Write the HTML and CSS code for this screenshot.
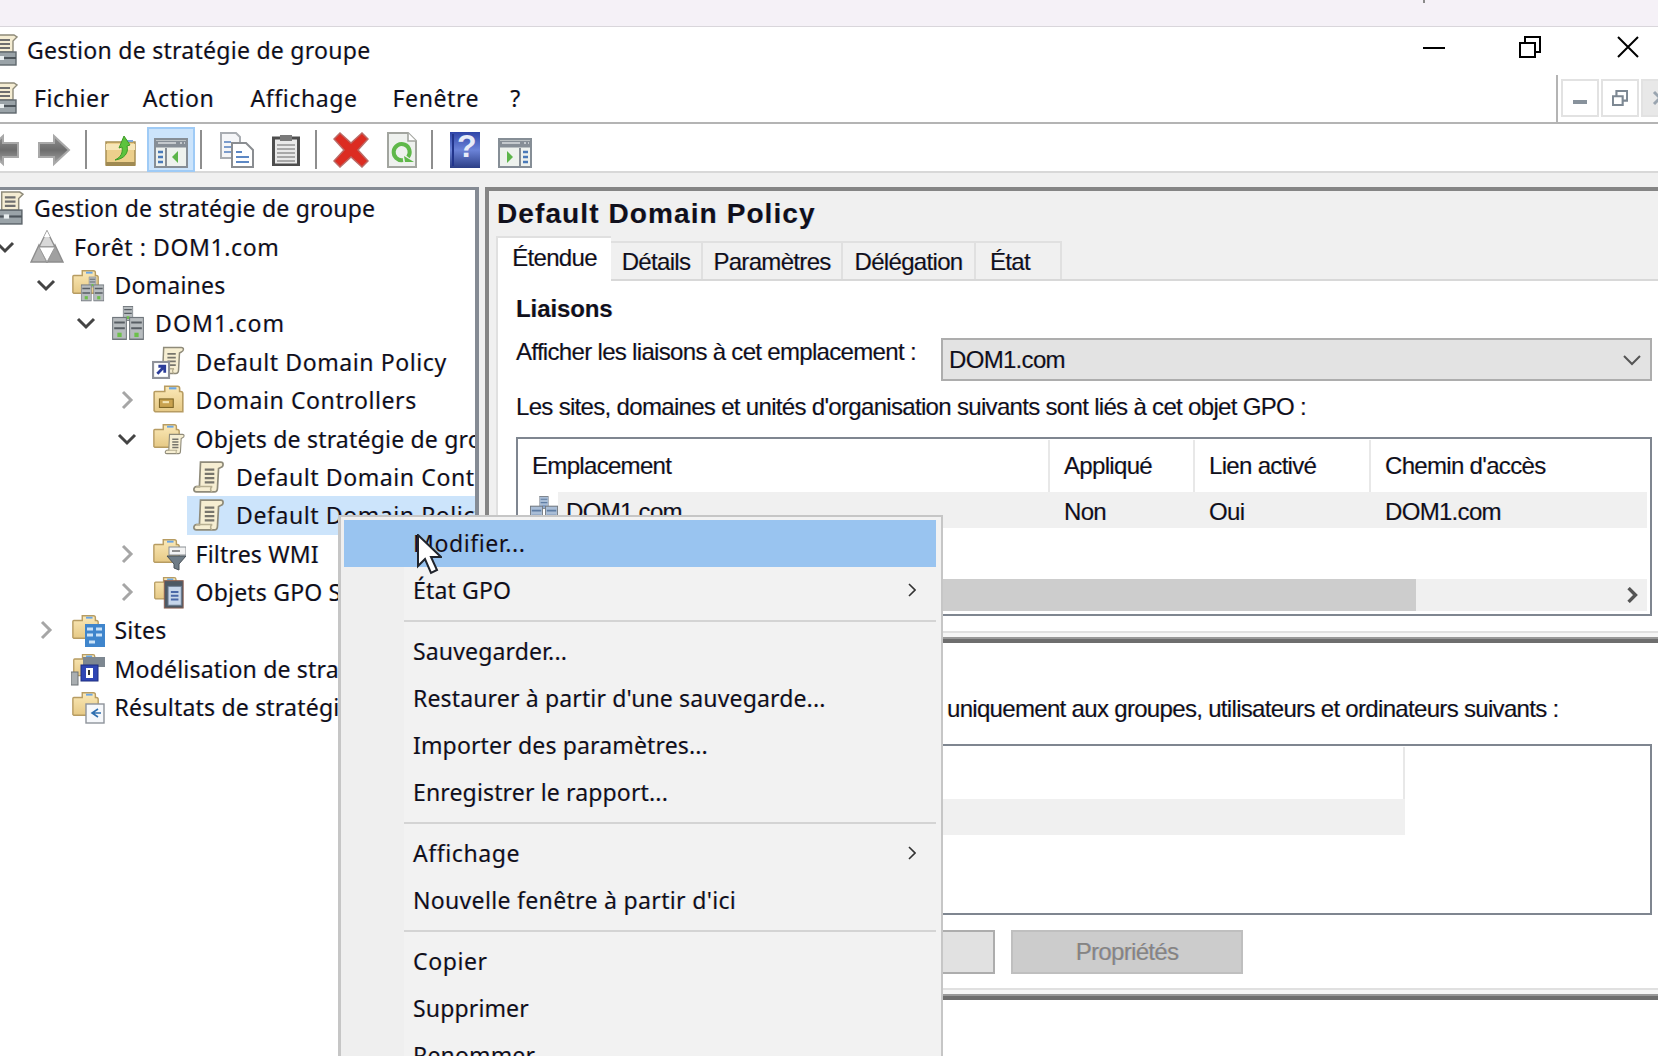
FILE: index.html
```html
<!DOCTYPE html>
<html lang="fr">
<head>
    <meta charset="UTF-8">
    <title>Gestion de stratégie de groupe</title>
    <link rel="stylesheet" href="styles.css">
</head>
<body>
    <svg class="sprites" aria-hidden="true">
        <defs>
            <linearGradient id="gFolder" x1="0" y1="0" x2="0" y2="1">
                <stop offset="0" stop-color="#fbe9b8"/>
                <stop offset="1" stop-color="#e6c985"/>
            </linearGradient>
            <linearGradient id="gArrow" x1="0" y1="0" x2="0" y2="1">
                <stop offset="0" stop-color="#8f8f8f"/>
                <stop offset=".5" stop-color="#6d6d6d"/>
                <stop offset="1" stop-color="#a5a5a5"/>
            </linearGradient>
            <linearGradient id="gHelp" x1="0" y1="0" x2="0" y2="1">
                <stop offset="0" stop-color="#2f45a8"/>
                <stop offset=".5" stop-color="#6b83d8"/>
                <stop offset="1" stop-color="#2c3f86"/>
            </linearGradient>
            <symbol id="i-folder" viewBox="0 0 32 32">
                <path d="M2 9a1 1 0 0 1 1-1h9V3h12a2 2 0 0 1 2 2v3h1a2 2 0 0 1 2 2v17H3l-1-1z" fill="url(#gFolder)" stroke="#b79c62" stroke-width="1.5"/>
                <path d="M16 5h7" stroke="#6aa6e6" stroke-width="2"/>
            </symbol>
            <symbol id="i-scroll" viewBox="0 0 32 32">
                <path d="M8 2h19c3 0 3 4 0 5l-2 1-1 18c0 2-1 4-3 4H4c-3 0-3-4 0-5h3z" fill="#f6eed2" stroke="#8f8b7a" stroke-width="1.6"/>
                <path d="M12 9h9M12 13h9M12 17h9M12 21h9" stroke="#77756c" stroke-width="2"/>
                <path d="M4 25h15c-2 1-2 4 0 5" fill="none" stroke="#b8b092" stroke-width="1.5"/>
            </symbol>
            <symbol id="i-server" viewBox="0 0 14 16" preserveAspectRatio="none">
                <rect class="srv-body" x=".5" y=".5" width="13" height="15" stroke="#70767c"/>
                <path class="srv-line" d="M2 4h10M2 8h10" stroke-width="1.4"/>
                <rect class="srv-led" x="5" y="11" width="4" height="3"/>
            </symbol>
            <symbol id="i-console" viewBox="0 0 32 32">
                <path d="M11 1h17l3 2-4 4v11H11z" fill="#f5edd3" stroke="#8f8b7a" stroke-width="1.4"/>
                <path d="M14 6h10M14 10h10M14 14h10" stroke="#6f6f6f" stroke-width="2"/>
                <rect x="3" y="18" width="27" height="13" fill="#9aa3a8" stroke="#5f676d" stroke-width="1.4"/>
                <path d="M3 24h27" stroke="#4d555b" stroke-width="2"/>
                <rect x="13" y="22" width="5" height="4" fill="#e9eef0"/>
            </symbol>
            <symbol id="i-forest" viewBox="0 0 34 34">
                <path d="M17 1l8 16H9z" fill="#d8d8d8" stroke="#8d8d8d" stroke-width="1.4"/>
                <path d="M9 15l8 17H1z" fill="#b4b4b4" stroke="#8d8d8d" stroke-width="1.4"/>
                <path d="M25 15l8 17H17z" fill="#a0a0a0" stroke="#8d8d8d" stroke-width="1.4"/>
                <path d="M17 17h-8l8 15 8-15z" fill="#fff" stroke="#9a9a9a"/>
                <path d="M17 1l-3 6h6z" fill="#fff"/>
            </symbol>
            <symbol id="i-domain" viewBox="0 0 32 32">
                <use href="#i-server" x="11" y="0" width="10" height="14"/>
                <use href="#i-server" x="1" y="10" width="14" height="22"/>
                <use href="#i-server" x="17" y="10" width="14" height="22"/>
            </symbol>
            <symbol id="i-domains" viewBox="0 0 34 34">
                <use href="#i-folder" x="0" y="0" width="30" height="30"/>
                <use href="#i-domain" x="9" y="8" width="25" height="26"/>
            </symbol>
            <symbol id="i-link" viewBox="0 0 32 32">
                <use href="#i-scroll" x="4" y="0" width="28" height="29"/>
                <rect x="1" y="16" width="15" height="15" fill="#fff" stroke="#8f929a" stroke-width="2"/>
                <path d="M5 27l6-6M6 20h6v6" fill="none" stroke="#2c3d9a" stroke-width="2.6"/>
            </symbol>
            <symbol id="i-ou" viewBox="0 0 32 32">
                <use href="#i-folder" x="0" y="0" width="32" height="32"/>
                <rect x="7" y="15" width="13" height="8" fill="#c9a24f" stroke="#7d6526"/>
                <path d="M10 18h6" stroke="#f4e5b4" stroke-width="2"/>
            </symbol>
            <symbol id="i-gpos" viewBox="0 0 34 34">
                <use href="#i-folder" x="0" y="0" width="30" height="30"/>
                <use href="#i-scroll" x="12" y="10" width="22" height="24"/>
            </symbol>
            <symbol id="i-wmi" viewBox="0 0 34 34">
                <use href="#i-folder" x="0" y="0" width="30" height="30"/>
                <rect x="17" y="10" width="17" height="8" fill="#f3f3f3" stroke="#8a8f94"/>
                <path d="M15 19h19l-7 8v6l-5-2v-4z" fill="#6f7c86" stroke="#4a5259"/>
                <path d="M20 14h8" stroke="#777" stroke-width="1.6"/>
            </symbol>
            <symbol id="i-starter" viewBox="0 0 34 36">
                <use href="#i-folder" x="0" y="0" width="30" height="30"/>
                <rect x="12" y="6" width="20" height="29" fill="#4d5964" stroke="#8f5f50"/>
                <rect x="16" y="12" width="14" height="20" fill="#c7d6ea" stroke="#6b7c92"/>
                <path d="M19 18h8M19 22h8M19 26h8" stroke="#4a68a8" stroke-width="2"/>
            </symbol>
            <symbol id="i-sites" viewBox="0 0 34 34">
                <use href="#i-folder" x="0" y="0" width="30" height="30"/>
                <rect x="14" y="11" width="20" height="23" fill="#3f85cc"/>
                <path d="M16 16h6M25 16h6M16 22h6M25 22h6M18 29h6" stroke="#c9e2f7" stroke-width="3"/>
            </symbol>
            <symbol id="i-model" viewBox="0 0 34 34">
                <use href="#i-folder" x="1" y="0" width="28" height="28"/>
                <rect x="12" y="5" width="22" height="10" fill="#7d8791"/>
                <rect x="0" y="20" width="7" height="13" fill="#a9aeb1" stroke="#6d7276"/>
                <rect x="10" y="13" width="17" height="16" fill="#2f46b4" stroke="#1f2f80"/>
                <rect x="15" y="16" width="7" height="10" fill="#fff"/>
                <path d="M18 18v5" stroke="#333" stroke-width="2"/>
            </symbol>
            <symbol id="i-results" viewBox="0 0 34 34">
                <use href="#i-folder" x="0" y="0" width="30" height="30"/>
                <rect x="15" y="14" width="18" height="19" fill="#f6f8fb" stroke="#8e939a" stroke-width="1.4"/>
                <path d="M27 19l-6 4 6 4M21 23h9" fill="none" stroke="#2f6fb0" stroke-width="1.6"/>
            </symbol>
            <symbol id="i-left" viewBox="0 0 34 34">
                <path d="M17 3L2 17l15 14v-7h15V10H17z" fill="url(#gArrow)" stroke="#a9a9a9" stroke-width="2"/>
            </symbol>
            <symbol id="i-right" viewBox="0 0 34 34">
                <path d="M17 3l15 14-15 14v-7H2V10h15z" fill="url(#gArrow)" stroke="#a9a9a9" stroke-width="2"/>
            </symbol>
            <symbol id="i-up" viewBox="0 0 32 34">
                <path d="M1 9h29v23H1z" fill="#eccf8c" stroke="#a89054" stroke-width="1.5"/>
                <path d="M1 14h29" stroke="#f7e6b8" stroke-width="6"/>
                <path d="M1 31h29" stroke="#a08a52" stroke-width="4"/>
                <path d="M20 8h8" stroke="#7fa8d8" stroke-width="2"/>
                <path d="M10 27c6-3 8-7 7-13l-3 1 5-12 6 9-3 1c2 7-3 13-12 14z" fill="#5cc33d" stroke="#3d9a27"/>
            </symbol>
            <symbol id="i-pane-l" viewBox="0 0 34 30">
                <rect x="1" y="1" width="32" height="28" fill="#eef2ee" stroke="#868e96" stroke-width="2"/>
                <path d="M1 6h32" stroke="#868e96" stroke-width="7"/>
                <path d="M4 5h18M26 5h2M30 5h1" stroke="#d9dde0" stroke-width="1.6"/>
                <path d="M12 10v18" stroke="#868e96" stroke-width="2"/>
                <path d="M4 14h5M4 19h5M4 24h5" stroke="#4a7ab8" stroke-width="2.4"/>
                <path d="M24 13v12l-6-6z" fill="#5cb54a"/>
            </symbol>
            <symbol id="i-pane-r" viewBox="0 0 34 30">
                <rect x="1" y="1" width="32" height="28" fill="#eef2ee" stroke="#868e96" stroke-width="2"/>
                <path d="M1 6h32" stroke="#868e96" stroke-width="7"/>
                <path d="M4 5h18M26 5h2M30 5h1" stroke="#d9dde0" stroke-width="1.6"/>
                <path d="M22 10v18" stroke="#868e96" stroke-width="2"/>
                <path d="M25 14h5M25 19h5M25 24h5" stroke="#4a7ab8" stroke-width="2.4"/>
                <path d="M9 13v12l6-6z" fill="#5cb54a"/>
            </symbol>
            <symbol id="i-copy" viewBox="0 0 36 36">
                <path d="M2 1h15l4 4v21H2z" fill="#f5f6f8" stroke="#a9adb2" stroke-width="2"/>
                <path d="M5 10h7M5 15h10M5 20h10" stroke="#7b9ccc" stroke-width="2"/>
                <path d="M13 11h14l7 7v17H13z" fill="#fff" stroke="#8a8d91" stroke-width="2"/>
                <path d="M17 20h6M17 25h13M17 30h13" stroke="#5d88c4" stroke-width="2"/>
            </symbol>
            <symbol id="i-paste" viewBox="0 0 28 32">
                <rect x="1.5" y="4" width="25" height="27" fill="#e9e9e9" stroke="#4d4d4d" stroke-width="3"/>
                <rect x="8" y="1" width="12" height="6" fill="#7a7a7a"/>
                <path d="M5 11h18M5 15h18M5 19h18M5 23h18M5 27h18" stroke="#a8a8a8" stroke-width="2"/>
            </symbol>
            <symbol id="i-delete" viewBox="0 0 36 36">
                <path d="M7 1l11 10L29 1l6 6-10 11 10 11-6 6-11-10L7 35l-6-6 10-11L1 7z" fill="#dc2c22" stroke="#bb6a66" stroke-width="1.5"/>
            </symbol>
            <symbol id="i-refresh" viewBox="0 0 30 36">
                <path d="M1 1h20l8 8v26H1z" fill="#eef1ee" stroke="#a2a59f" stroke-width="2"/>
                <path d="M21 1v8h8" fill="#fff" stroke="#a2a59f" stroke-width="1.6"/>
                <path d="M21 25a8 8 0 1 0-5 3" fill="none" stroke="#5fb84a" stroke-width="4"/>
                <path d="M17 24l10 6h-9z" fill="#5fb84a"/>
            </symbol>
            <symbol id="i-help" viewBox="0 0 30 36">
                <rect width="30" height="36" fill="url(#gHelp)"/>
                <path d="M2 2h2v32H2" fill="#22358c"/>
            </symbol>
            <symbol id="i-chev-down" viewBox="0 0 20 14">
                <path d="M2 3l8 8 8-8" fill="none" stroke="#444" stroke-width="3"/>
            </symbol>
            <symbol id="i-chev-right" viewBox="0 0 14 20">
                <path d="M3 2l8 8-8 8" fill="none" stroke="#a6a6a6" stroke-width="3"/>
            </symbol>
        </defs>
    </svg>

    <div class="app">
        <div class="top-strip"><span class="strip-mark"></span></div>

        <div class="title-bar">
            <svg class="bar-icon"><use href="#i-console"/></svg>
            <span class="title-text">Gestion de stratégie de groupe</span>
            <div class="win-buttons">
                <svg class="win-min" viewBox="0 0 22 2"><rect width="22" height="2"/></svg>
                <svg class="win-restore" viewBox="0 0 22 22"><path d="M1 7h15v14H1zM6 6V1h15v15h-4" fill="none" stroke="#000" stroke-width="2"/></svg>
                <svg class="win-close" viewBox="0 0 22 22"><path d="M1 1l20 20M21 1L1 21" stroke="#000" stroke-width="2"/></svg>
            </div>
        </div>

        <div class="menu-bar">
            <div class="menu-main">
                <svg class="bar-icon"><use href="#i-console"/></svg>
                <span class="menu-item m-fichier">Fichier</span>
                <span class="menu-item m-action">Action</span>
                <span class="menu-item m-affichage">Affichage</span>
                <span class="menu-item m-fenetre">Fenêtre</span>
                <span class="menu-item m-help">?</span>
            </div>
            <div class="mdi-buttons">
                <div class="mdi-btn"><svg viewBox="0 0 14 4"><rect width="14" height="4" fill="#88929c"/></svg></div>
                <div class="mdi-btn"><svg viewBox="0 0 18 18"><path d="M1 7h11v10H1zM5 6V1h12v11h-4" fill="none" stroke="#7d8893" stroke-width="2.4"/></svg></div>
                <div class="mdi-btn mdi-close"><svg viewBox="0 0 16 16"><path d="M2 2l12 12M14 2L2 14" stroke="#9aa5b0" stroke-width="3"/></svg></div>
            </div>
        </div>

        <div class="toolbar">
            <svg class="tb-back"><use href="#i-left"/></svg>
            <svg class="tb-forward"><use href="#i-right"/></svg>
            <span class="tb-sep sep-1"></span>
            <svg class="tb-up"><use href="#i-up"/></svg>
            <span class="tb-active"><svg class="tb-pane"><use href="#i-pane-l"/></svg></span>
            <span class="tb-sep sep-2"></span>
            <svg class="tb-copy"><use href="#i-copy"/></svg>
            <svg class="tb-paste"><use href="#i-paste"/></svg>
            <span class="tb-sep sep-3"></span>
            <svg class="tb-delete"><use href="#i-delete"/></svg>
            <svg class="tb-refresh"><use href="#i-refresh"/></svg>
            <span class="tb-sep sep-4"></span>
            <span class="tb-help"><svg><use href="#i-help"/></svg><b>?</b></span>
            <svg class="tb-pane tb-last"><use href="#i-pane-r"/></svg>
        </div>

        <div class="main">
            <div class="tree">
                <div class="row l0"><span class="chev"></span><div class="item"><svg class="ico"><use href="#i-console"/></svg><span>Gestion de stratégie de groupe</span></div></div>
                <div class="row l1"><svg class="chev"><use href="#i-chev-down"/></svg><div class="item"><svg class="ico"><use href="#i-forest"/></svg><span class="wide">Forêt : DOM1.com</span></div></div>
                <div class="row l2"><svg class="chev"><use href="#i-chev-down"/></svg><div class="item"><svg class="ico"><use href="#i-domains"/></svg><span>Domaines</span></div></div>
                <div class="row l3"><svg class="chev"><use href="#i-chev-down"/></svg><div class="item"><svg class="ico"><use href="#i-domain"/></svg><span class="wider">DOM1.com</span></div></div>
                <div class="row l4"><span class="chev"></span><div class="item"><svg class="ico"><use href="#i-link"/></svg><span class="wide">Default Domain Policy</span></div></div>
                <div class="row l4"><svg class="chev chev-r"><use href="#i-chev-right"/></svg><div class="item"><svg class="ico"><use href="#i-ou"/></svg><span class="wide">Domain Controllers</span></div></div>
                <div class="row l4"><svg class="chev"><use href="#i-chev-down"/></svg><div class="item"><svg class="ico"><use href="#i-gpos"/></svg><span>Objets de stratégie de groupe</span></div></div>
                <div class="row l5"><span class="chev"></span><div class="item"><svg class="ico"><use href="#i-scroll"/></svg><span class="wide">Default Domain Controllers Policy</span></div></div>
                <div class="row l5"><span class="chev"></span><div class="item selected"><svg class="ico"><use href="#i-scroll"/></svg><span class="wide">Default Domain Policy</span></div></div>
                <div class="row l4"><svg class="chev chev-r"><use href="#i-chev-right"/></svg><div class="item"><svg class="ico"><use href="#i-wmi"/></svg><span>Filtres WMI</span></div></div>
                <div class="row l4"><svg class="chev chev-r"><use href="#i-chev-right"/></svg><div class="item"><svg class="ico"><use href="#i-starter"/></svg><span>Objets GPO Starter</span></div></div>
                <div class="row l2"><svg class="chev chev-r"><use href="#i-chev-right"/></svg><div class="item"><svg class="ico"><use href="#i-sites"/></svg><span>Sites</span></div></div>
                <div class="row l2"><span class="chev"></span><div class="item"><svg class="ico"><use href="#i-model"/></svg><span>Modélisation de stratégie de groupe</span></div></div>
                <div class="row l2"><span class="chev"></span><div class="item"><svg class="ico"><use href="#i-results"/></svg><span>Résultats de stratégie de groupe</span></div></div>
            </div>

            <div class="details">
                <h1>Default Domain Policy</h1>
                <div class="tabs">
                    <span class="tab active">Étendue</span>
                    <span class="tab t-details">Détails</span>
                    <span class="tab t-params">Paramètres</span>
                    <span class="tab t-deleg">Délégation</span>
                    <span class="tab t-etat">État</span>
                </div>
                <div class="tab-body">
                    <section class="sec sec-links">
                        <h2>Liaisons</h2>
                        <div class="field">
                            <label>Afficher les liaisons à cet emplacement :</label>
                            <div class="select">
                                <span>DOM1.com</span>
                                <svg viewBox="0 0 20 12"><path d="M2 2l8 8 8-8" fill="none" stroke="#555" stroke-width="2"/></svg>
                            </div>
                        </div>
                        <p class="line-links">Les sites, domaines et unités d'organisation suivants sont liés à cet objet GPO :</p>
                        <div class="list list-links">
                            <div class="list-head">
                                <span>Emplacement</span><span>Appliqué</span><span>Lien activé</span><span>Chemin d'accès</span>
                            </div>
                            <div class="list-row">
                                <span class="cell-first"><svg class="row-ico"><use href="#i-domain"/></svg><em>DOM1.com</em></span><span>Non</span><span>Oui</span><span>DOM1.com</span>
                            </div>
                            <div class="scrollbar">
                                <div class="thumb"></div>
                                <svg viewBox="0 0 10 14"><path d="M2 1l6 6-6 6" fill="none" stroke="#555" stroke-width="3"/></svg>
                            </div>
                        </div>
                    </section>
                    <div class="splitter"></div>
                    <section class="sec sec-filter">
                        <h2>Filtrage de sécurité</h2>
                        <p class="line-filter">Les paramètres dans ce GPO s'appliquent uniquement aux groupes, utilisateurs et ordinateurs suivants :</p>
                        <div class="list list-filter">
                            <div class="filter-head"><span>Nom</span></div>
                            <div class="filter-row"><span>Utilisateurs authentifiés</span></div>
                        </div>
                        <div class="buttons">
                            <button class="btn">Ajouter...</button>
                            <button class="btn">Supprimer</button>
                            <button class="btn disabled">Propriétés</button>
                        </div>
                    </section>
                    <div class="splitter"></div>
                    <section class="sec-wmi">
                        <p>Ce GPO est lié au filtre WMI suivant</p>
                    </section>
                </div>
            </div>
        </div>

        <div class="context-menu">
            <div class="cm-item cm-wide hover">Modifier...</div>
            <div class="cm-item">État GPO<svg viewBox="0 0 8 14"><path d="M1 1l6 6-6 6" fill="none" stroke="#333" stroke-width="1.6"/></svg></div>
            <div class="cm-sep"></div>
            <div class="cm-item">Sauvegarder...</div>
            <div class="cm-item">Restaurer à partir d'une sauvegarde...</div>
            <div class="cm-item">Importer des paramètres...</div>
            <div class="cm-item">Enregistrer le rapport...</div>
            <div class="cm-sep"></div>
            <div class="cm-item cm-wide">Affichage<svg viewBox="0 0 8 14"><path d="M1 1l6 6-6 6" fill="none" stroke="#333" stroke-width="1.6"/></svg></div>
            <div class="cm-item cm-new">Nouvelle fenêtre à partir d'ici</div>
            <div class="cm-sep"></div>
            <div class="cm-item cm-wide">Copier</div>
            <div class="cm-item">Supprimer</div>
            <div class="cm-item">Renommer</div>
        </div>

        <svg class="cursor" viewBox="0 0 25 41"><path d="M1 1v31l7-7 6 14 6-3-6-13h10z" fill="#fff" stroke="#20242c" stroke-width="2"/></svg>
    </div>
</body>
</html>
```

FILE: styles.css
```css
* {
    box-sizing: border-box;
}
body {
    margin: 0;
    background-color: #fff;
    color: #10101c;
    font-family: "Noto Sans", sans-serif;
    font-size: 23px;
    text-shadow: -0.6px 0 rgba(255, 180, 60, 0.35), 0.6px 0 rgba(60, 130, 255, 0.35);
}
.sprites {
    position: absolute;
    width: 0;
    height: 0;
}
.srv-body {
    fill: var(--srv, #b7bcbf);
}
.srv-line {
    stroke: var(--srv-line, #585e64);
}
.srv-led {
    fill: var(--srv-led, #6cc04a);
}
.app {
    position: relative;
    width: 1658px;
    height: 1056px;
    overflow: hidden;
}

/* window chrome */
.top-strip {
    height: 27px;
    padding-left: 1423px;
    background-color: #f5f1f7;
    border-bottom: 1px solid #d9d6db;
}
.strip-mark {
    display: block;
    width: 2px;
    height: 3px;
    background-color: #8a8a8a;
}
.title-bar {
    height: 46px;
    display: flex;
    align-items: center;
}
.bar-icon {
    width: 32px;
    height: 32px;
    margin-left: -14px;
    flex: none;
}
.title-text {
    margin-left: 9px;
    letter-spacing: 0.27px;
}
.win-buttons {
    margin-left: auto;
    display: flex;
    align-items: center;
    padding-right: 19px;
    height: 100%;
}
.win-min {
    width: 22px;
    height: 2px;
    margin-top: -4px;
}
.win-restore {
    width: 22px;
    height: 22px;
    margin-left: 74px;
    margin-top: -6px;
}
.win-close {
    width: 22px;
    height: 22px;
    margin-left: 76px;
    margin-top: -6px;
}
.menu-bar {
    height: 51px;
    display: flex;
}
.menu-main {
    width: 1558px;
    flex: none;
    display: flex;
    align-items: center;
    padding-bottom: 2px;
    border-bottom: 2px solid #b4b4b4;
    border-right: 2px solid #b4b4b4;
    margin-top: 2px;
}
.menu-item {
    flex: none;
    letter-spacing: 0.6px;
}
.m-fichier { margin-left: 16px; }
.m-action { margin-left: 33px; }
.m-affichage { margin-left: 36px; }
.m-fenetre { margin-left: 35px; }
.m-help { margin-left: 31px; }
.mdi-buttons {
    flex: none;
    width: 100px;
    display: flex;
    gap: 2px;
    padding: 6px 0 5px 3px;
    border-bottom: 2px solid #b4b4b4;
}
.mdi-btn {
    width: 38px;
    height: 38px;
    flex: none;
    border: 2px solid #e2e2e2;
    display: flex;
    align-items: center;
    justify-content: center;
}
.mdi-btn svg {
    width: 16px;
    height: 16px;
    flex: none;
}
.mdi-btn:first-child svg {
    height: 4px;
    width: 14px;
    margin-top: 8px;
}
.mdi-close {
    background-color: #e8e8e8;
}

/* toolbar */
.toolbar {
    height: 49px;
    display: flex;
    align-items: center;
    border-bottom: 2px solid #d8d8d8;
}
.toolbar > svg,
.tb-help {
    flex: none;
    margin-top: 5px;
}
.tb-back {
    width: 34px;
    height: 34px;
    margin-left: -14px;
}
.tb-forward {
    width: 34px;
    height: 34px;
    margin-left: 17px;
}
.tb-sep {
    flex: none;
    width: 2px;
    height: 39px;
    margin-top: 3px;
    background-color: #8e8e8e;
}
.sep-1 { margin-left: 14px; }
.tb-up {
    width: 32px;
    height: 34px;
    margin-left: 18px;
}
.tb-active {
    flex: none;
    width: 48px;
    height: 45px;
    margin-left: 10px;
    margin-top: 3px;
    background-color: #cce4fb;
    border: 2px solid #9fcbf6;
    display: flex;
    align-items: center;
    justify-content: center;
}
.tb-pane {
    width: 34px;
    height: 30px;
    margin-top: 8px;
}
.sep-2 { margin-left: 5px; }
.tb-copy {
    width: 36px;
    height: 36px;
    margin-left: 17px;
}
.tb-paste {
    width: 28px;
    height: 32px;
    margin-left: 17px;
}
.sep-3 { margin-left: 15px; }
.tb-delete {
    width: 36px;
    height: 36px;
    margin-left: 16px;
}
.tb-refresh {
    width: 30px;
    height: 36px;
    margin-left: 18px;
}
.sep-4 { margin-left: 14px; }
.tb-help {
    position: relative;
    width: 30px;
    height: 36px;
    margin-left: 17px;
}
.tb-help svg {
    width: 30px;
    height: 36px;
}
.tb-help b {
    position: absolute;
    left: 7px;
    top: -4px;
    color: #e8ecf8;
    font-size: 32px;
    font-family: "Liberation Sans", sans-serif;
    text-shadow: none;
}
.toolbar > .tb-last {
    margin-left: 18px;
    margin-top: 11px;
}

/* main area */
.main {
    height: 883px;
    display: flex;
    padding-top: 14px;
    background-color: #f0f0f0;
}

/* tree */
.tree {
    width: 479px;
    flex: none;
    background-color: #fff;
    border-top: 3px solid #858b94;
    border-right: 4px solid #858b94;
    overflow: hidden;
}
.row {
    height: 38.4px;
    display: flex;
    align-items: center;
    white-space: nowrap;
}
.row:first-child {
    margin-top: -1px;
}
.l0 { margin-left: -45px; }
.l1 { margin-left: -5px; }
.l2 { margin-left: 35.5px; }
.l3 { margin-left: 76px; }
.l4 { margin-left: 116.5px; }
.l5 { margin-left: 157px; }
.chev {
    flex: none;
    width: 20px;
    height: 14px;
    margin-right: 15px;
}
.chev-r {
    height: 20px;
}
.item {
    flex: 1;
    height: 100%;
    display: flex;
    align-items: center;
    gap: 10px;
    margin-left: -5px;
    padding-left: 5px;
    letter-spacing: 0.2px;
}
.item .wide {
    letter-spacing: 0.6px;
}
.item .wider {
    letter-spacing: 1.1px;
}
.item.selected {
    background-color: #cce4fb;
}
.ico {
    width: 34px;
    height: 34px;
    flex: none;
}

/* right panel */
.details {
    flex: 1;
    margin-left: 6px;
    min-width: 0;
    border-top: 4px solid #858585;
    border-left: 4px solid #858585;
    font-family: "Liberation Sans", sans-serif;
    font-size: 24px;
    letter-spacing: -0.68px;
}
h1 {
    margin: 0;
    height: 44px;
    padding: 7px 0 0 8px;
    font-size: 28px;
    line-height: 32px;
    font-family: "Liberation Sans", sans-serif;
    letter-spacing: 1.1px;
}
.tabs {
    height: 46px;
    margin-left: 7px;
    display: flex;
    align-items: flex-end;
    border-bottom: 2px solid #d8d8d8;
}
.tab {
    height: 38px;
    padding-top: 2px;
    border: 2px solid #e0e0e0;
    border-left: 0;
    border-bottom: 0;
    display: flex;
    align-items: center;
    justify-content: center;
    flex: none;
}
.tab.active {
    height: 45px;
    width: 115px;
    margin-bottom: -2px;
    padding-top: 0;
    padding-bottom: 3px;
    background-color: #fff;
    border-left: 2px solid #e0e0e0;
    border-right: 0;
}
.t-details { width: 92px; }
.t-params { width: 140px; }
.t-deleg { width: 133px; }
.t-etat {
    width: 86px;
    justify-content: flex-start;
    padding-left: 14px;
}
.tab-body {
    margin-left: 7px;
    background-color: #fff;
    border-left: 2px solid #e0e0e0;
    height: 776px;
    overflow: hidden;
}
.sec {
    padding: 14px 6px 0 18px;
    border-bottom: 2px solid #e0e0e0;
}
.sec-links {
    height: 352px;
}
h2 {
    margin: 0;
    font-size: 24px;
    line-height: 28px;
    height: 28px;
    letter-spacing: -0.1px;
}
.field {
    margin-top: 15px;
    display: flex;
    height: 43px;
}
.field label {
    width: 425px;
    flex: none;
    line-height: 28px;
}
.select {
    flex: 1;
    background-color: #e3e3e3;
    border: 2px solid #adadad;
    display: flex;
    align-items: center;
    justify-content: space-between;
    padding: 1px 6px 0 6px;
}
.select svg {
    width: 20px;
    height: 12px;
    margin-right: 2px;
}
.line-links {
    margin: 12px 0 0;
    line-height: 28px;
}
.list {
    border: 2px solid #7f8690;
    background-color: #fff;
}
.list-links {
    margin-top: 16px;
    height: 179px;
    padding-right: 3px;
}
.list-head,
.list-row {
    display: grid;
    grid-template-columns: 532px 145px 176px 1fr;
}
.list-head {
    height: 53px;
    padding-top: 1px;
}
.list-head span {
    padding-left: 14px;
    line-height: 52px;
    border-right: 2px solid #e8e8e8;
}
.list-head span:last-child {
    border-right: 0;
}
.list-row {
    height: 36px;
    line-height: 40px;
    background: linear-gradient(90deg, #fff 40px, #f0f0f0 40px);
}
.list-row span {
    padding-left: 14px;
}
.list-row .cell-first {
    --srv: #a9bdd6;
    --srv-line: #5f7da3;
    --srv-led: #7f9cc4;
    display: flex;
    align-items: center;
    gap: 0;
    padding-left: 11px;
    overflow: hidden;
}
.row-ico {
    width: 30px;
    height: 30px;
    flex: none;
    margin-top: -2px;
}
.cell-first em {
    font-style: normal;
    margin-left: 7px;
}
.scrollbar {
    margin-top: 51px;
    height: 32px;
    background-color: #f0f0f0;
    position: relative;
}
.thumb {
    width: 898px;
    height: 100%;
    background-color: #cdcdcd;
}
.scrollbar svg {
    position: absolute;
    right: 9px;
    top: 8px;
    width: 12px;
    height: 16px;
}
.splitter {
    height: 10px;
    background-color: #f6f6f6;
    border-bottom: 4px solid #6e6e6e;
    box-shadow: inset 0 -2px 0 #999;
}
.sec-filter {
    height: 347px;
    padding-top: 10px;
}
.line-filter {
    margin: 14px 0 0;
    line-height: 28px;
    text-align: right;
    padding-right: 102px;
    white-space: nowrap;
}
.list-filter {
    margin-top: 21px;
    height: 171px;
    padding-top: 1px;
}
.filter-head {
    width: 887px;
    height: 52px;
    padding-left: 14px;
    line-height: 50px;
    border-right: 2px solid #e8e8e8;
}
.filter-row {
    width: 887px;
    height: 36px;
    padding-left: 40px;
    line-height: 36px;
    background-color: #f0f0f0;
}
.buttons {
    display: flex;
    gap: 16px;
    margin-top: 15px;
    margin-left: 1px;
}
.btn {
    width: 231px;
    height: 44px;
    background-color: #e1e1e1;
    border: 2px solid #adadad;
    font: inherit;
    letter-spacing: inherit;
    color: inherit;
    text-shadow: inherit;
}
.btn.disabled {
    width: 232px;
    background-color: #cccccc;
    border-color: #bfbfbf;
    color: #848484;
}
.sec-wmi {
    padding-top: 51px;
    width: 542px;
    text-align: right;
    white-space: nowrap;
}
.sec-wmi p {
    margin: 0;
    line-height: 28px;
}

/* context menu */
.context-menu {
    position: absolute;
    left: 338px;
    top: 515px;
    width: 605px;
    height: 560px;
    padding: 3px 5px 0 3px;
    border: 2px solid #c6c6c6;
    border-left-width: 3px;
    background: linear-gradient(90deg, #efefef 63px, #f2f2f2 63px);
    letter-spacing: 0.15px;
}
.cm-item {
    height: 47px;
    padding-left: 69px;
    padding-right: 20px;
    padding-bottom: 1px;
    display: flex;
    align-items: center;
    justify-content: space-between;
}
.cm-wide {
    letter-spacing: 0.6px;
}
.cm-new {
    letter-spacing: 0.33px;
}
.cm-item.hover {
    background-color: #99c4f0;
}
.cm-item svg {
    width: 8px;
    height: 14px;
}
.cm-sep {
    height: 14px;
    margin-left: 60px;
    padding-top: 6px;
}
.cm-sep::before {
    content: "";
    display: block;
    height: 2px;
    background-color: #d4d4d4;
}
.cursor {
    position: absolute;
    left: 417px;
    top: 534px;
    width: 25px;
    height: 41px;
}
```
